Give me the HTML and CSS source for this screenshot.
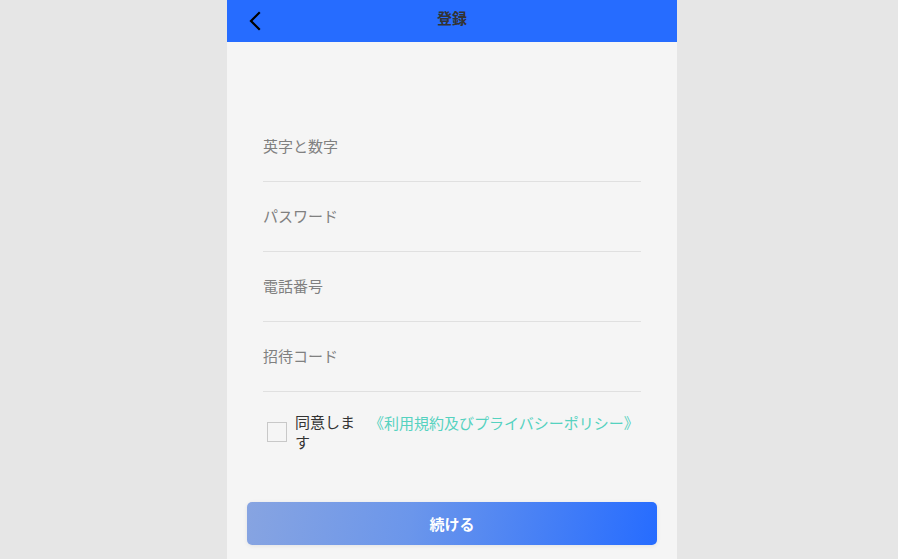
FILE: index.html
```html
<!DOCTYPE html>
<html lang="ja">
<head>
<meta charset="utf-8">
<title>登録</title>
<link rel="stylesheet" href="styles.css">
</head>
<body>
<div class="app">
  <header class="header">
    <div class="back">
      <svg width="14" height="20" viewBox="0 0 14 20" aria-hidden="true"><path d="M11 2 L3 10 L11 18" fill="none" stroke="#000" stroke-width="2.2" stroke-linecap="square"/></svg>
    </div>
    <div class="title">登録</div>
    <div class="spacer"></div>
  </header>
  <main class="form">
    <div class="field"><span class="placeholder">英字と数字</span></div>
    <div class="field"><span class="placeholder">パスワード</span></div>
    <div class="field"><span class="placeholder">電話番号</span></div>
    <div class="field"><span class="placeholder">招待コード</span></div>
    <div class="agree">
      <span class="checkbox"></span>
      <span class="agree-text">同意します</span>
      <a class="policy">《利用規約及びプライバシーポリシー》</a>
    </div>
  </main>
  <div class="actions">
    <button class="submit">続ける</button>
  </div>
</div>
</body>
</html>
```

FILE: styles.css
```css
html, body {
  margin: 0;
  padding: 0;
}
body {
  background: #e6e6e6;
  font-family: "Noto Sans CJK JP", "Noto Sans", sans-serif;
}
.app {
  width: 450px;
  min-height: 559px;
  margin-left: calc(50% - 222px);
  background: #f5f5f5;
}
.header {
  height: 42px;
  background: #266cff;
  display: grid;
  grid-template-columns: 1fr auto 1fr;
  align-items: center;
}
.back {
  display: flex;
  align-items: center;
  padding-left: 21px;
  height: 42px;
}
.back svg {
  display: block;
}
.title {
  font-size: 15px;
  font-weight: bold;
  color: #333;
  padding-bottom: 7px;
}
.form {
  padding: 70px 36px 0;
}
.field {
  height: 69px;
  border-bottom: 1px solid #e0e0e0;
  display: flex;
  align-items: center;
}
.placeholder {
  font-size: 15px;
  color: #808080;
  margin-top: -3px;
}
.agree {
  display: flex;
  align-items: flex-start;
  padding-top: 20px;
  font-size: 15px;
  line-height: 20px;
}
.checkbox {
  width: 18px;
  height: 18px;
  border: 1px solid #c8c8c8;
  margin: 10px 0 0 4px;
  flex: none;
}
.agree-text {
  width: 64px;
  margin-left: 8px;
  color: #333;
}
.policy {
  margin-left: 10px;
  margin-top: 1px;
  color: #55d2c0;
  white-space: nowrap;
}
.actions {
  padding: 50px 20px 0;
}
.submit {
  display: block;
  width: 410px;
  height: 43px;
  border: none;
  border-radius: 5px;
  background: linear-gradient(100deg, #87a4e1 0%, #6b96eb 40%, #266cff 100%);
  box-shadow: 0 1px 4px rgba(0,0,0,0.08);
  color: #fff;
  font-family: "Noto Sans CJK JP", "Noto Sans", sans-serif;
  font-size: 15px;
  font-weight: bold;
}
```
